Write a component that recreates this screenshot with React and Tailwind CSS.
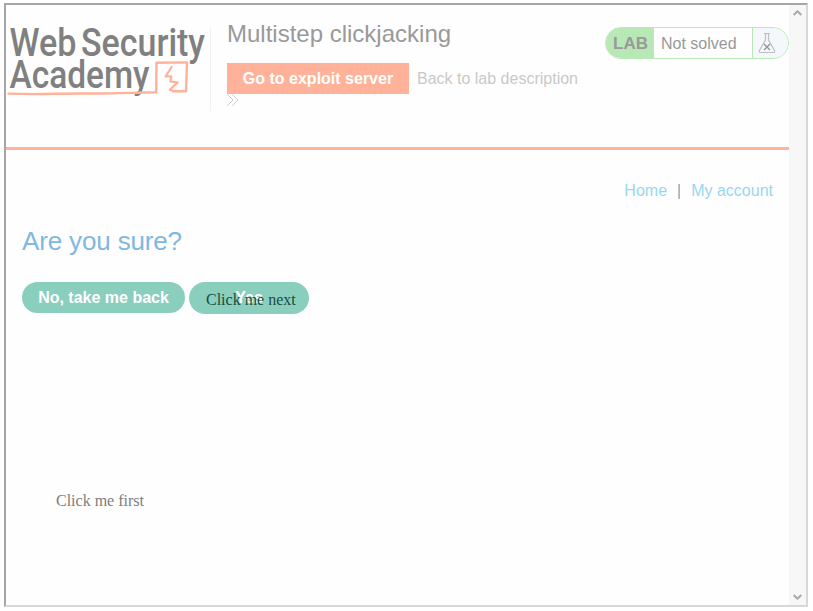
import React from "react";

function Logo() {
  return (
    <svg
      viewBox="0 0 204 110"
      className="block h-[110px] w-[204px] shrink-0 font-['Roboto','Liberation_Sans',sans-serif]"
      aria-label="Web Security Academy"
    >
      <g fill="#808080" fontSize="38.5" fontWeight="500">
        <text x="3.5" y="50.5" textLength="67" lengthAdjust="spacingAndGlyphs">Web</text>
        <text x="75" y="50.5" textLength="124" lengthAdjust="spacingAndGlyphs">Security</text>
        <text x="3.5" y="83" textLength="140" lengthAdjust="spacingAndGlyphs">Academy</text>
      </g>
      <g fill="none" stroke="#ffb299" strokeLinecap="round" strokeLinejoin="round">
        <path strokeWidth="2.4" d="M2.5 88.6 C35 90 50 88.2 80 88.5 S125 87.5 150.2 87.2 L150.5 57.8 L181 57.4 L180 86.2 L167 86.3" />
        <path strokeWidth="2.2" d="M165.6 62 L159.6 71.3 L165.3 71.4 L164.3 76.5 L171.6 77.4 L163.8 84.8 L168 86" />
      </g>
    </svg>
  );
}

function Flask() {
  return (
    <svg viewBox="0 0 18 22" className="h-[22px] w-[18px]" fill="none" stroke="#bdbfc0" strokeWidth="1.2">
      <path d="M6 1.5 H12 M7.5 2 V8 L1.5 18.5 Q.8 20.5 2.5 20.5 H15.5 Q17.2 20.5 16.5 18.5 L10.5 8 V2" />
      <path d="M6 12 L12 18 M12 12 L6 18" stroke="#8f9192" strokeWidth="1.3" />
    </svg>
  );
}

function LabStatus() {
  return (
    <div className="mt-[22px] flex h-8 w-[184px] shrink-0 overflow-hidden rounded-full border border-[#b8e8b6] text-[#999]">
      <div className="flex w-12 items-center bg-[#b8e8b6] pl-[7px] pt-[2px] text-[17px] font-bold">LAB</div>
      <div className="flex flex-1 items-center pl-[7px] pt-[2px]">Not solved</div>
      <div className="flex w-[36px] items-center border-l border-[#b8e8b6] bg-[#f4f8fa] pl-[5px]">
        <Flask />
      </div>
    </div>
  );
}

function Scrollbar() {
  return (
    <div className="flex w-[17px] shrink-0 flex-col items-center justify-between bg-[#f7f7f7] py-[5px]">
      <svg viewBox="0 0 9 6" className="h-[6px] w-[9px]" fill="none" stroke="#a8a8a8" strokeWidth="2">
        <path d="M.7 5 L4.5 1.3 L8.3 5" />
      </svg>
      <svg viewBox="0 0 9 6" className="h-[6px] w-[9px]" fill="none" stroke="#a8a8a8" strokeWidth="2">
        <path d="M.7 1 L4.5 4.7 L8.3 1" />
      </svg>
    </div>
  );
}

export default function App() {
  return (
    <div className="relative h-[611px] w-[813px] overflow-hidden bg-white pl-1 pt-[3px] font-['Liberation_Sans',Arial,sans-serif] text-base">
      <div className="flex h-[604px] w-[804px] border-2 border-b-[#d8d8d8] border-l-[#a6a6a6] border-r-[#d8d8d8] border-t-[#a6a6a6] bg-[#fefefe]">
        <div className="min-w-0 flex-1">
          <header className="flex h-[145px] border-b-[3px] border-[#ffb299]">
            <Logo />
            <div className="mt-[22px] h-[84px] w-px shrink-0 bg-[#f2f2f2]" />
            <div className="min-w-0 flex-1 pl-4 pt-[14px]">
              <h1 className="text-2xl leading-[30px] whitespace-nowrap text-[#999]">Multistep clickjacking</h1>
              <div className="mt-[14px] flex items-center gap-2">
                <button className="h-[31px] w-[182px] bg-[#ffb299] font-bold text-white">Go to exploit server</button>
                <a className="whitespace-nowrap text-[#c9c9c9]">Back to lab description</a>
              </div>
              <svg viewBox="0 0 12 12" className="block h-3 w-3" fill="none" stroke="#c9c9c9" strokeWidth="1">
                <path d="M.5 .5 L6 6 L.5 11.5 M5.5 .5 L11 6 L5.5 11.5" />
              </svg>
            </div>
            <LabStatus />
          </header>
          <nav className="flex justify-end gap-[10px] pr-4 pt-[29px] leading-6 text-[#99d6f2]">
            <a>Home</a>
            <span className="text-[#999] opacity-99 will-change-transform">|</span>
            <a>My account</a>
          </nav>
          <main className="pl-4 pt-[21px]">
            <h2 className="text-[26px] leading-[34px] tracking-[-0.15px] text-[#80b8df]">Are you sure?</h2>
            <div className="mt-6 flex items-start gap-1 font-bold text-white">
              <button className="h-[31px] w-[163px] rounded-full bg-[#8acebd]">No, take me back</button>
              <button className="h-8 w-[120px] rounded-full bg-[#8acebd] pb-px">Yes</button>
            </div>
          </main>
        </div>
        <Scrollbar />
      </div>
      <div className="absolute left-[206px] top-[290px] font-['Liberation_Serif',serif] leading-5 whitespace-nowrap text-[#174f3e]">
        Click me next
      </div>
      <div className="absolute left-[56px] top-[491px] font-['Liberation_Serif',serif] leading-5 whitespace-nowrap text-[#7d7d7d]">
        Click me first
      </div>
    </div>
  );
}
